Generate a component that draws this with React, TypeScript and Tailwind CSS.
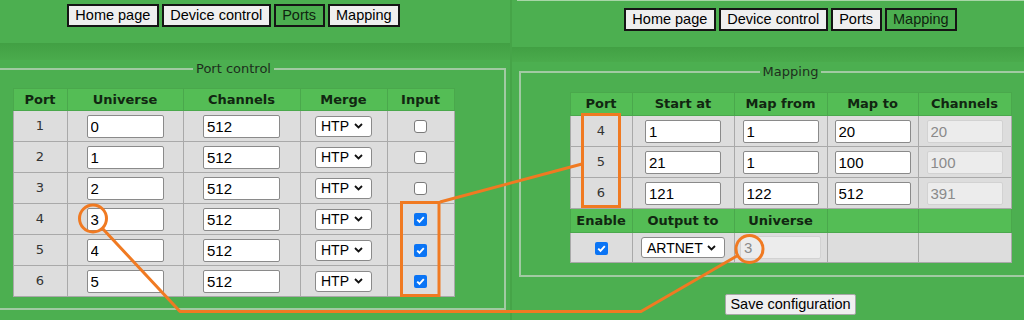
import React from "react";

const SANS = "font-['Liberation_Sans',Arial,sans-serif]";
const VERD = "font-['DejaVu_Sans',Verdana,sans-serif]";

function Nav({ active }: { active: string }) {
  const items = ["Home page", "Device control", "Ports", "Mapping"];
  return (
    <div className="flex justify-center gap-[3px]">
      {items.map((it) => (
        <span
          key={it}
          className={`${SANS} inline-flex items-center h-[23px] px-[6.5px] border-2 border-[#151515] text-[14.5px] leading-none ${
            it === active ? "bg-[#4caf50] text-[#0f230f]" : "bg-[#efefef] text-black"
          }`}
        >
          {it}
        </span>
      ))}
    </div>
  );
}

function TextIn({ value, w, disabled }: { value: string; w: string; disabled?: boolean }) {
  return (
    <input
      readOnly
      value={value}
      className={`${SANS} ${w} h-[23px] px-[3px] border rounded-[2px] text-[15px] align-middle outline-none ${
        disabled ? "bg-[#ececec] border-[#d2d2d2] text-[#8a8a8a]" : "bg-white border-[#8a8a8a] text-black"
      }`}
    />
  );
}

function Sel({ label, w }: { label: string; w: string }) {
  return (
    <span
      className={`${SANS} ${w} inline-flex items-center justify-between h-[21px] pl-[5px] pr-[8px] bg-white border border-[#8a8a8a] rounded-[3px] text-[14px] leading-none text-black align-middle`}
    >
      {label}
      <svg width="9" height="6" viewBox="0 0 9 6">
        <path d="M1 1 L4.5 4.5 L8 1" fill="none" stroke="#111" strokeWidth="1.8" />
      </svg>
    </span>
  );
}

function Check({ checked }: { checked?: boolean }) {
  return checked ? (
    <span className="inline-flex items-center justify-center w-[13px] h-[13px] rounded-[2px] bg-[#0a74f5] align-middle">
      <svg width="11" height="11" viewBox="0 0 11 11">
        <path d="M2.2 5.6 L4.5 7.8 L8.8 3.2" fill="none" stroke="white" strokeWidth="1.9" />
      </svg>
    </span>
  ) : (
    <span className="inline-block w-[13px] h-[13px] rounded-[3px] bg-white border border-[#7a7a7a] align-middle" />
  );
}

const TH = `${VERD} bg-[#54bd55] border border-[#4aa84c] text-[13px] font-bold text-[#112611] text-center p-0`;
const TD = `${VERD} bg-[#dddddd] border border-[#a9a9a9] text-[13px] text-[#333] text-center p-0`;

function LeftPanel() {
  const rows = [
    ["1", "0", false],
    ["2", "1", false],
    ["3", "2", false],
    ["4", "3", true],
    ["5", "4", true],
    ["6", "5", true],
  ] as const;
  return (
    <div className="w-[510px] shrink-0 overflow-hidden">
      <div className="w-[553px] ml-[-43px] flex flex-col">
        <div className="pt-[4px]">
          <Nav active="Ports" />
        </div>
        <div className="mt-[16px] h-[17px] bg-linear-to-b from-[#42a044] to-[#4aab4c]" />
        <fieldset className="mt-[1px] mx-[4px] border-2 border-[#a2caa3] pb-[11px]">
          <legend className={`${VERD} mx-auto px-[3px] text-[13px] leading-[16px] text-[#1d2e1d]`}>Port control</legend>
          <table className="mt-[11px] mx-auto border-collapse table-fixed w-[441px]">
            <colgroup>
              <col className="w-[54px]" />
              <col className="w-[116px]" />
              <col className="w-[117px]" />
              <col className="w-[87px]" />
              <col className="w-[67px]" />
            </colgroup>
            <thead>
              <tr className="h-[22px]">
                <th className={TH}>Port</th>
                <th className={TH}>Universe</th>
                <th className={TH}>Channels</th>
                <th className={TH}>Merge</th>
                <th className={TH}>Input</th>
              </tr>
            </thead>
            <tbody>
              {rows.map(([p, u, c]) => (
                <tr key={p} className="h-[31px]">
                  <td className={TD}>{p}</td>
                  <td className={TD}>
                    <TextIn value={u} w="w-[77px]" />
                  </td>
                  <td className={TD}>
                    <TextIn value="512" w="w-[77px]" />
                  </td>
                  <td className={TD}>
                    <Sel label="HTP" w="w-[57px]" />
                  </td>
                  <td className={TD}>
                    <Check checked={c} />
                  </td>
                </tr>
              ))}
            </tbody>
          </table>
        </fieldset>
      </div>
    </div>
  );
}

function RightPanel() {
  const rows = [
    ["4", "1", "1", "20", "20"],
    ["5", "21", "1", "100", "100"],
    ["6", "121", "122", "512", "391"],
  ];
  return (
    <div className="flex-1 overflow-hidden border-l-2 border-[#46a448]">
      <div className="w-[557px] flex flex-col">
        <div className="h-[1px] ml-[5px] bg-[#a8d6a8]" />
        <div className="mt-[7px]">
          <Nav active="Mapping" />
        </div>
        <div className="mt-[16px] h-[15px] bg-linear-to-b from-[#42a044] to-[#4aab4c]" />
        <fieldset className="mt-[2px] mx-[7px] border-2 border-[#a2caa3] pb-[12px]">
          <legend className={`${VERD} mx-auto px-[3px] text-[13px] leading-[16px] text-[#1d2e1d]`}>Mapping</legend>
          <table className="mt-[12px] mx-auto border-collapse table-fixed w-[441px]">
            <colgroup>
              <col className="w-[62px]" />
              <col className="w-[102px]" />
              <col className="w-[93px]" />
              <col className="w-[91px]" />
              <col className="w-[93px]" />
            </colgroup>
            <tbody>
              <tr className="h-[23px]">
                <th className={TH}>Port</th>
                <th className={TH}>Start at</th>
                <th className={TH}>Map from</th>
                <th className={TH}>Map to</th>
                <th className={TH}>Channels</th>
              </tr>
              {rows.map((r) => (
                <tr key={r[0]} className="h-[31px]">
                  <td className={TD}>{r[0]}</td>
                  <td className={TD}>
                    <TextIn value={r[1]} w="w-[76px]" />
                  </td>
                  <td className={TD}>
                    <TextIn value={r[2]} w="w-[76px]" />
                  </td>
                  <td className={TD}>
                    <TextIn value={r[3]} w="w-[76px]" />
                  </td>
                  <td className={TD}>
                    <TextIn value={r[4]} w="w-[76px]" disabled />
                  </td>
                </tr>
              ))}
              <tr className="h-[24px]">
                <th className={TH}>Enable</th>
                <th className={TH}>Output to</th>
                <th className={TH}>Universe</th>
                <th className={TH}></th>
                <th className={TH}></th>
              </tr>
              <tr className="h-[30px]">
                <td className={TD}>
                  <Check checked />
                </td>
                <td className={TD}>
                  <Sel label="ARTNET" w="w-[84px]" />
                </td>
                <td className={TD}>
                  <TextIn value="3" w="w-[81px]" disabled />
                </td>
                <td className={TD}></td>
                <td className={TD}></td>
              </tr>
            </tbody>
          </table>
        </fieldset>
        <div className="mt-[17px] flex justify-center">
          <button
            className={`${SANS} h-[21px] px-[4px] bg-[#efefef] border border-[#a8a8a8] rounded-[2px] text-[14.5px] leading-none text-black`}
          >
            Save configuration
          </button>
        </div>
      </div>
    </div>
  );
}

function Annotations() {
  const c = "#f07a22";
  return (
    <svg className="absolute inset-0 pointer-events-none" width="1024" height="320" viewBox="0 0 1024 320">
      <rect x="401.5" y="202.5" width="37.5" height="93" fill="none" stroke={c} strokeWidth="3" />
      <line x1="440" y1="202" x2="582" y2="164" stroke={c} strokeWidth="3" />
      <rect x="582.5" y="114.5" width="37" height="92" fill="none" stroke={c} strokeWidth="3" />
      <circle cx="93" cy="218.5" r="13.5" fill="none" stroke={c} strokeWidth="3" />
      <polyline
        points="102.3,228.2 180,311.5 641,311.5 737.3,255.8"
        fill="none"
        stroke={c}
        strokeWidth="3"
        strokeLinejoin="round"
      />
      <circle cx="749.5" cy="249" r="13.5" fill="none" stroke={c} strokeWidth="3" />
    </svg>
  );
}

export default function App() {
  return (
    <div className="relative w-[1024px] h-[320px] overflow-hidden bg-[#4caf50] flex">
      <LeftPanel />
      <RightPanel />
      <Annotations />
    </div>
  );
}
